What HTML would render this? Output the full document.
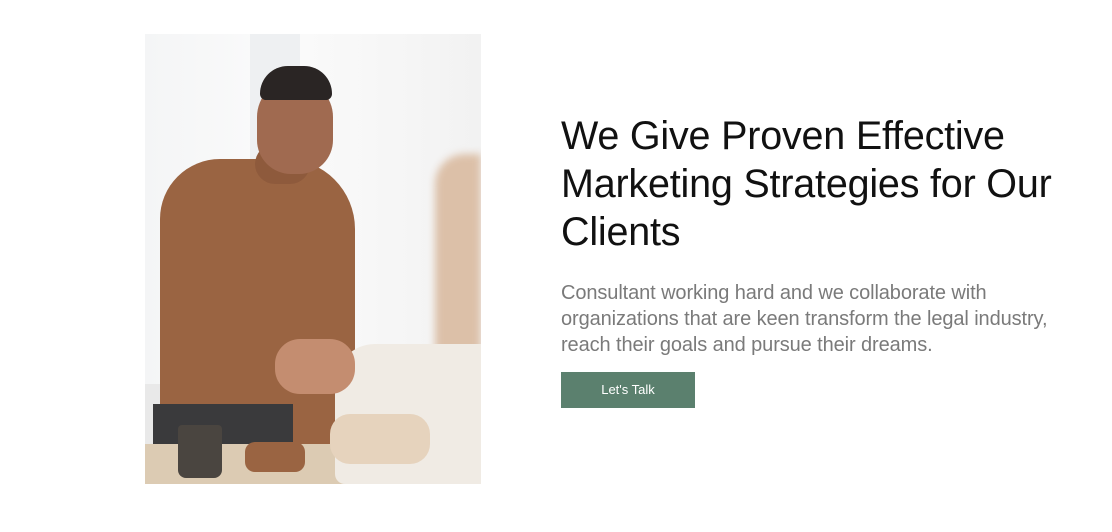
<!DOCTYPE html>
<html><head><style>
html,body{margin:0;padding:0;background:#fff;width:1112px;height:532px;overflow:hidden}
.ph{position:absolute;left:145px;top:34px;width:336px;height:450px;overflow:hidden;background:linear-gradient(90deg,#f4f5f6 0%,#fbfbfb 40%,#f2f2f2 100%)}
.ph div{position:absolute}
h1{position:absolute;left:561px;top:112px;margin:0;font:400 39.5px/48px "Liberation Sans",sans-serif;color:#111;letter-spacing:-0.2px;white-space:nowrap}
p{position:absolute;left:561px;top:280px;margin:0;font:400 20px/26px "Liberation Sans",sans-serif;color:#7a7a7a;white-space:nowrap;letter-spacing:-0.1px}
.btn{position:absolute;left:561px;top:372px;width:134px;height:36px;background:#5b806e;color:#fff;font:400 13px/36px "Liberation Sans",sans-serif;text-align:center}
</style></head><body>
<div class="ph">
  <div style="left:105px;top:0;width:50px;height:450px;background:#eef0f2"></div>
  <div style="left:0;top:350px;width:336px;height:100px;background:#e9e9e9"></div>
  <div style="left:15px;top:125px;width:195px;height:290px;background:#9a6442;border-radius:60px 70px 20px 20px"></div>
  <div style="left:110px;top:110px;width:55px;height:40px;background:#8e5a3c;border-radius:20px"></div>
  <div style="left:112px;top:45px;width:76px;height:95px;background:#a06a50;border-radius:38px 38px 34px 34px"></div>
  <div style="left:115px;top:32px;width:72px;height:34px;background:#2a2524;border-radius:36px 36px 8px 8px"></div>
  <div style="left:8px;top:370px;width:140px;height:50px;background:#3a3a3c"></div>
  <div style="left:0;top:410px;width:336px;height:40px;background:#dccbb3"></div>
  <div style="left:100px;top:408px;width:60px;height:30px;background:#9a6442;border-radius:10px"></div>
  <div style="left:290px;top:120px;width:46px;height:330px;background:#dcc0a8;border-radius:30px 0 0 0;filter:blur(4px)"></div>
  <div style="left:190px;top:310px;width:146px;height:140px;background:#f0ebe4;border-radius:40px 0 0 10px"></div>
  <div style="left:130px;top:305px;width:80px;height:55px;background:#c48d70;border-radius:25px"></div>
  <div style="left:185px;top:380px;width:100px;height:50px;background:#e6d3bd;border-radius:20px"></div>
  <div style="left:33px;top:391px;width:44px;height:53px;background:#4a4540;border-radius:4px 4px 8px 8px"></div>
</div>
<h1>We Give Proven Effective<br>Marketing Strategies for Our<br>Clients</h1>
<p>Consultant working hard and we collaborate with<br>organizations that are keen transform the legal industry,<br>reach their goals and pursue their dreams.</p>
<div class="btn">Let's Talk</div>
</body></html>
